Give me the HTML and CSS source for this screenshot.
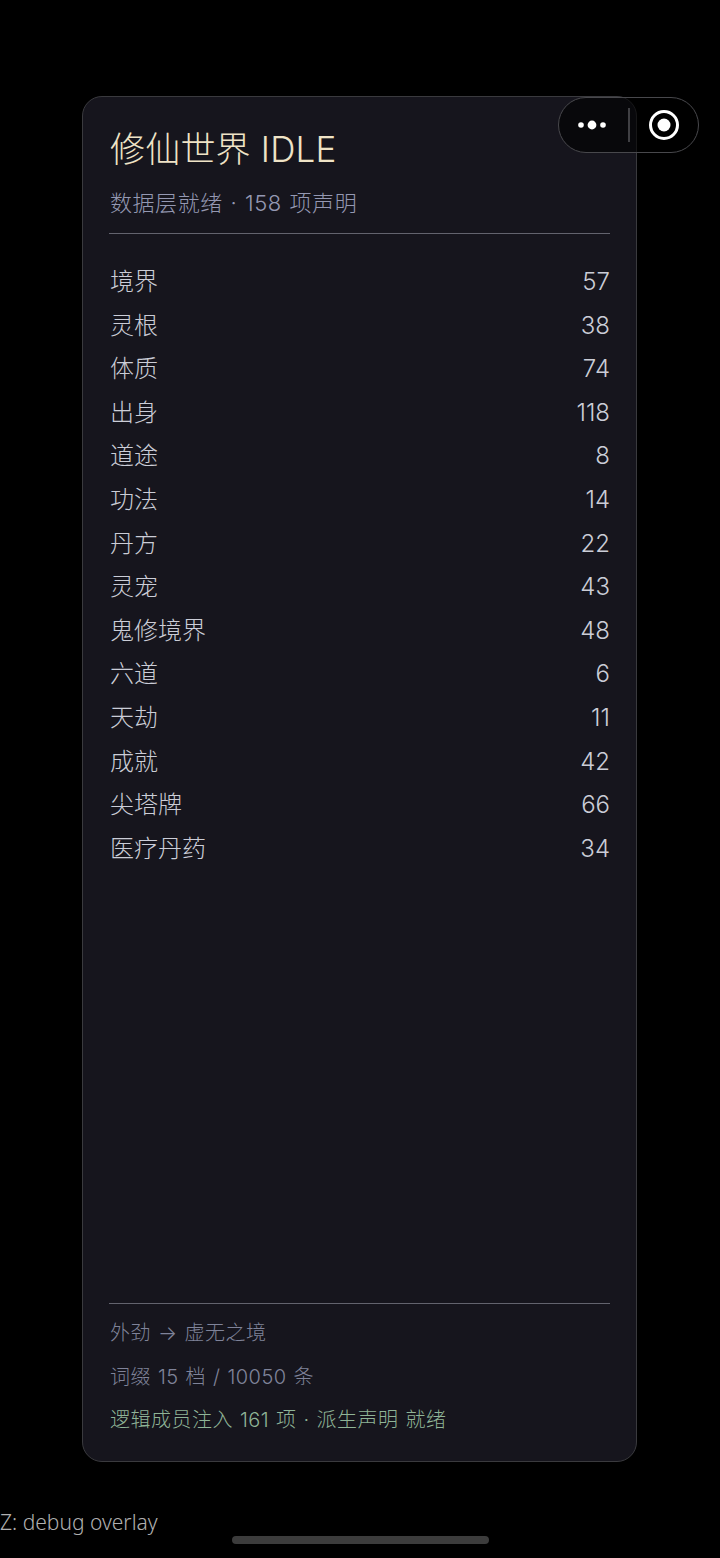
FILE: index.html
```html
<!DOCTYPE html>
<html lang="zh">
<head>
    <meta charset="UTF-8">
    <meta name="viewport" content="width=device-width, initial-scale=1.0">
    <title>修仙世界 IDLE</title>
    <link rel="stylesheet" href="styles.css">
</head>
<body>
    <div class="page">
        <div class="panel">
            <h1 class="title">修仙世界 IDLE</h1>
            <div class="subtitle">数据层就绪 · 158 项声明</div>
            <ul class="stats">
                <li><span>境界</span><span>57</span></li>
                <li><span>灵根</span><span>38</span></li>
                <li><span>体质</span><span>74</span></li>
                <li><span>出身</span><span>118</span></li>
                <li><span>道途</span><span>8</span></li>
                <li><span>功法</span><span>14</span></li>
                <li><span>丹方</span><span>22</span></li>
                <li><span>灵宠</span><span>43</span></li>
                <li><span>鬼修境界</span><span>48</span></li>
                <li><span>六道</span><span>6</span></li>
                <li><span>天劫</span><span>11</span></li>
                <li><span>成就</span><span>42</span></li>
                <li><span>尖塔牌</span><span>66</span></li>
                <li><span>医疗丹药</span><span>34</span></li>
            </ul>
            <div class="footer">
                <div class="footer-line">外劲 → 虚无之境</div>
                <div class="footer-line">词缀 15 档 / 10050 条</div>
                <div class="footer-line ok">逻辑成员注入 161 项 · 派生声明 就绪</div>
            </div>
        </div>
        <div class="hint">Z: debug overlay</div>
    </div>

    <div class="capsule">
        <div class="capsule-btn">
            <svg width="32" height="12" viewBox="0 0 32 12"><circle cx="4" cy="6" r="2.8" fill="#fff"/><circle cx="15" cy="6" r="4.4" fill="#fff"/><circle cx="26" cy="6" r="2.8" fill="#fff"/></svg>
        </div>
        <div class="capsule-sep"></div>
        <div class="capsule-btn">
            <svg width="32" height="32" viewBox="0 0 32 32"><circle cx="16" cy="16" r="13.5" fill="none" stroke="#fff" stroke-width="3"/><circle cx="16" cy="16" r="6.5" fill="#fff"/></svg>
        </div>
    </div>
    <div class="home-bar"></div>
</body>
</html>
```

FILE: styles.css
```css
* {
    box-sizing: border-box;
}
html, body {
    margin: 0;
    height: 100%;
    background: #000;
}
body {
    font-family: Inter, "Noto Sans CJK SC", sans-serif;
    font-weight: 300;
    overflow: hidden;
}
.page {
    height: 1558px;
    padding-top: 96px;
}
.panel {
    display: flex;
    flex-direction: column;
    width: 555px;
    height: 1366px;
    margin-left: 82px;
    padding: 27px 26px 18px 26px;
    background: #16151d;
    border: 1px solid #3a3a3e;
    border-radius: 20px;
}
.title {
    margin: 0;
    font-size: 35px;
    line-height: 50px;
    font-weight: 300;
    letter-spacing: 0.2px;
    text-indent: 1px;
    color: #efe3c6;
}
.subtitle {
    margin-top: 13px;
    padding-bottom: 14px;
    border-bottom: 1px solid #63636e;
    font-size: 22px;
    line-height: 32px;
    letter-spacing: 0.55px;
    word-spacing: 1px;
    text-indent: 1px;
    color: #9498b2;
}
.stats {
    list-style: none;
    margin: 26px 0 0;
    padding: 0;
    flex: 1;
}
.stats li {
    display: flex;
    justify-content: space-between;
    height: 43.6px;
    padding-left: 1px;
    font-size: 24px;
    line-height: 43.6px;
    color: #cbcdd7;
}
.footer {
    border-top: 1px solid #63636e;
    padding-top: 8px;
}
.footer-line {
    font-size: 20px;
    line-height: 43.6px;
    letter-spacing: 0.5px;
    word-spacing: 0.8px;
    text-indent: 1px;
    color: #7f8399;
}
.footer-line.ok {
    color: #8fb497;
}
.hint {
    margin-top: 45px;
    font-size: 21px;
    line-height: 30px;
    font-family: "Noto Sans", sans-serif;
    color: #b0b0b0;
}
.capsule {
    position: absolute;
    top: 97px;
    left: 558px;
    width: 141px;
    height: 56px;
    display: flex;
    align-items: center;
    border: 1px solid #48484c;
    border-radius: 28px;
    background: rgba(0, 0, 0, 0.6);
}
.capsule-btn {
    flex: 1;
    display: flex;
    justify-content: center;
    align-items: center;
}
.capsule-sep {
    width: 2px;
    height: 34px;
    background: #404044;
}
.home-bar {
    position: absolute;
    left: 232px;
    top: 1536px;
    width: 257px;
    height: 8px;
    border-radius: 4px;
    background: #3c3c3c;
}
```
